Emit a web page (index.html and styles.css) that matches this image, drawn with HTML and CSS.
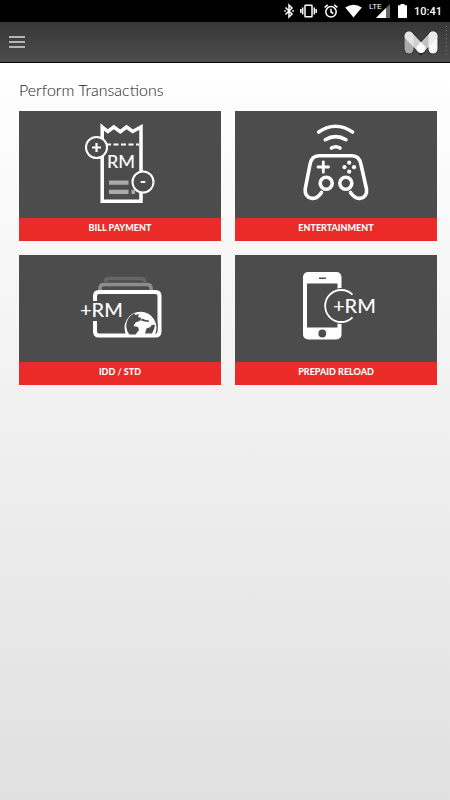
FILE: index.html
```html
<!DOCTYPE html>
<html lang="en">
<head>
<meta charset="utf-8">
<meta name="viewport" content="width=device-width, initial-scale=1">
<title>Perform Transactions</title>
<link rel="stylesheet" href="styles.css">
</head>
<body>
<div class="status">
  <svg width="8" height="14" viewBox="1 0 8 14" fill="none" stroke="#fff" stroke-width="1.500" overflow="visible"><path d="M1.500 3.500 8 10 5 13V1l3 3-6.500 6.500"/><path d="M.2 7h1.600M8.300 7h1.600"/></svg>
  <svg width="17" height="14" viewBox="0 0 17 14" fill="none" stroke="#fff" stroke-width="1.500"><rect x="5" y="1.200" width="7" height="11.600" rx=".5"/><path d="M2.700 3.500v7M.8 5v4M14.300 3.500v7M16.200 5v4"/></svg>
  <svg width="14" height="14" viewBox="0 0 14 14" fill="none" stroke="#fff" stroke-width="1.500"><circle cx="7" cy="7.800" r="5.200"/><path d="M.6 3.400 3.800.8M13.400 3.400 10.200.8M7 4.800V8l2.300 1.500"/></svg>
  <svg width="17" height="14" viewBox="0 0 17 14"><path fill="#fff" d="M.2 3.600Q8.500-2.200 16.800 3.600L8.500 13.500z"/></svg>
  <span class="signal">
    <svg width="22" height="16" viewBox="0 0 22 16"><path fill="#666" d="M21 1v14H7z"/><path fill="#fff" d="M17 5V15H7z"/></svg>
    <span class="network">LTE</span>
  </span>
  <svg width="9" height="14" viewBox="0 0 9 14"><path fill="#fff" d="M2.500 0h4v1.200H9V14H0V1.200h2.500z"/></svg>
  <time class="clock">10:41</time>
</div>
<header class="bar">
  <button class="menu" type="button" aria-label="Menu"><span class="line"></span><span class="line"></span><span class="line"></span></button>
  <div class="brand">
    <svg width="36" height="28" viewBox="0 0 36 28" role="img" aria-label="M">
      <g fill="none" stroke-linecap="round" stroke-width="10.500"><path stroke="#2a2a2a" d="M6 8v13M30 8v13M6 8l12 12.500 12-12.500"/></g>
      <g fill="none" stroke-linecap="round" stroke-width="9">
        <path stroke="#aaa" d="M6 8v13"/><path stroke="#f8f8f8" d="M30 8v13"/>
        <path stroke="#e8e8e8" stroke-opacity=".8" d="M30 8 18 20.500"/><path stroke="#eee" stroke-opacity=".85" d="M6 8l12 12.500"/>
      </g>
      <path fill="#fff" d="M18 14.200l4 4.300q1.500 5-4 6.500-5.500-1.500-4-6.500z"/>
    </svg>
    <span class="dots"></span>
  </div>
</header>
<main class="content">
  <h1 class="title">Perform Transactions</h1>
  <nav class="tiles">
    <a class="tile" href="#bill">
      <svg class="art" viewBox="0 -4 90 107">
        <path class="stroke" stroke-width="3.500" d="M27.200 86.200V12l5.600 4.500 6-4.500 6.500 4.700 6.200-4.700 6.200 4.500L66 12v74.200z"/>
        <path class="stroke" stroke-width="2" stroke-dasharray="5 2.500" d="M31 29.500h33"/>
        <text x="32" y="53" font-size="18">RM</text>
        <path fill="#aaa" d="M34 65.500h19.500v4.200H34zM34 74.800h19.500v4.200H34zM56.500 74.800H60v4.200h-3.500z"/>
        <circle class="disc" cx="21.500" cy="32.500" r="10.500"/>
        <circle class="disc" cx="68" cy="67" r="10.500"/>
        <path class="stroke" stroke-width="2.200" d="M17 32.500h9M21.500 28v9M65.700 67h4.600"/>
      </svg>
      <span class="label">BILL PAYMENT</span>
    </a>
    <a class="tile" href="#entertainment">
      <svg class="art" viewBox="1 -4 90 107">
        <g class="stroke round" stroke-width="3.600">
          <path d="M28.700 17Q45.500 5.500 62.500 17M35.300 24.700Q45.500 18.500 56 24.700M41.500 33Q45.800 30.500 50 33"/>
          <path d="M31.500 77.500C28.500 82 25 84 21.500 83.200 16.800 82.500 14.800 79 15.200 74L20 49.500C21 44 24 40.700 29 40.700H62C67 40.700 70 44 71 49.500L76.500 74C77.200 79 75 82.500 70.500 83.200 66.500 84 63.500 82 60.500 77.500"/>
          <circle cx="36.200" cy="68.200" r="6"/><circle cx="55.800" cy="68.200" r="6"/>
          <path stroke-width="2.800" d="M28 52h10.500M33.300 46.800v10.500"/>
        </g>
        <g fill="#fff"><circle cx="59.200" cy="47.700" r="2.100"/><circle cx="59.200" cy="56.700" r="2.100"/><circle cx="54.500" cy="52.200" r="2.100"/><circle cx="64" cy="52.200" r="2.100"/></g>
      </svg>
      <span class="label">ENTERTAINMENT</span>
    </a>
    <a class="tile" href="#idd">
      <svg class="art" viewBox="0 -10 90 107">
        <path fill="none" stroke="#666" stroke-width="3.500" d="M30.500 17v-1q0-2.500 3.500-2.500h32q3.500 0 3.500 2.500v1"/>
        <path fill="none" stroke="#8d8d8d" stroke-width="3.500" d="M25 25v-2q0-3.500 4-3.500h43q4 0 4 3.500v2"/>
        <path class="stroke" stroke-width="4" d="M20 36v-5q0-4 4-4h56.500q4 0 4 4v35.500q0 4-4 4H24q-4 0-4-4V56"/>
        <text x="5" y="51.500" font-size="20">+RM</text>
        <path fill="#4c4c4c" d="M51 68.500A16.800 16.800 0 1 1 81 68.500z"/>
        <path fill="#fff" d="M51.500 70.500A16 16 0 1 1 79.500 70.500z"/>
        <path fill="#4c4c4c" d="M51.500 63c-1-6 2-12 8-14.500l1 1.500 3.500-1-1 3 3.500 1-2 3-4 1.500-2 3.500 4.500 1 1 3-3.500 4.500h-6q-2.500-2.500-3-6.500zM64.500 55l3.500-1.300 2.500 1.300 3 .3.500 1.700-4.500-.5zM70 68.500l1.500-5 4-1.500 1-2 3.500-.3q-.5 5-3 8.800z"/>
      </svg>
      <span class="label">IDD / STD</span>
    </a>
    <a class="tile" href="#reload">
      <svg class="art" viewBox="1 -10 90 107">
        <rect x="13" y="7" width="38.500" height="67.500" rx="5" fill="#fff"/>
        <path fill="#4c4c4c" d="M17 18.500h30.500v44H17zM29 12.500h7v1.600h-7z"/>
        <circle cx="32.300" cy="68.500" r="3.900" fill="#4c4c4c"/>
        <path stroke="#4c4c4c" fill="#4c4c4c" stroke-width="4" d="M62 29.200A16 16 0 1 0 62 52.800z"/>
        <path class="stroke" stroke-width="1.800" d="M62.500 29.700A16 16 0 1 0 62.500 52.300"/>
        <text x="43" y="47.500" font-size="20">+RM</text>
      </svg>
      <span class="label">PREPAID RELOAD</span>
    </a>
  </nav>
</main>
</body>
</html>
```
FILE: styles.css
```css
* { box-sizing: border-box; }

body {
  margin: 0;
  min-height: 100vh;
  display: flex;
  flex-direction: column;
  font-family: Lato, "Liberation Sans", sans-serif;
}

.status {
  display: flex;
  align-items: center;
  justify-content: flex-end;
  gap: 7px;
  height: 22px;
  padding-right: 8px;
  background: #000;
  color: #fff;
  font-family: Roboto, sans-serif;
}

.signal {
  position: relative;
  display: flex;
}

.network {
  position: absolute;
  top: 0;
  left: 0;
  font-size: 8px;
  line-height: 8px;
}

.clock {
  font-size: 11px;
  font-weight: 500;
}

.bar {
  display: flex;
  align-items: center;
  justify-content: space-between;
  height: 41px;
  padding: 0 3px 0 9px;
  background: linear-gradient(#373737, #4d4d4d);
  border-bottom: 1px solid #050505;
}

.menu {
  display: grid;
  gap: 3px;
  width: 16px;
  padding: 0;
  border: 0;
  background: none;
}

.line {
  height: 2px;
  background: #b4b4b4;
}

.brand {
  display: flex;
  align-items: center;
  gap: 7px;
}

.dots {
  width: 1px;
  height: 32px;
  background: repeating-linear-gradient(#777 0 1px, transparent 1px 4px);
}

.content {
  flex: 1;
  padding: 17px 13px 16px 19px;
  background: linear-gradient(#fff, #e0e0e0);
}

.title {
  margin: 0 0 11px;
  font-size: 16px;
  font-weight: 300;
  line-height: 20px;
  color: #222;
}

.tiles {
  display: grid;
  grid-template-columns: 1fr 1fr;
  gap: 14px;
}

.tile {
  display: flex;
  flex-direction: column;
  background: #4c4c4c;
  color: #fff;
  text-decoration: none;
}

.art {
  width: 90px;
  height: 107px;
  align-self: center;
  overflow: visible;
}

.art text {
  fill: #fff;
  font-weight: 500;
}

.stroke {
  fill: none;
  stroke: #fff;
}

.disc {
  fill: #4c4c4c;
  stroke: #fff;
  stroke-width: 2px;
}

.round {
  stroke-linecap: round;
  stroke-linejoin: round;
}

.label {
  padding: 3px 0 6px;
  background: #ea2b28;
  font-size: 9px;
  font-weight: 900;
  line-height: 14px;
  text-align: center;
}
```
